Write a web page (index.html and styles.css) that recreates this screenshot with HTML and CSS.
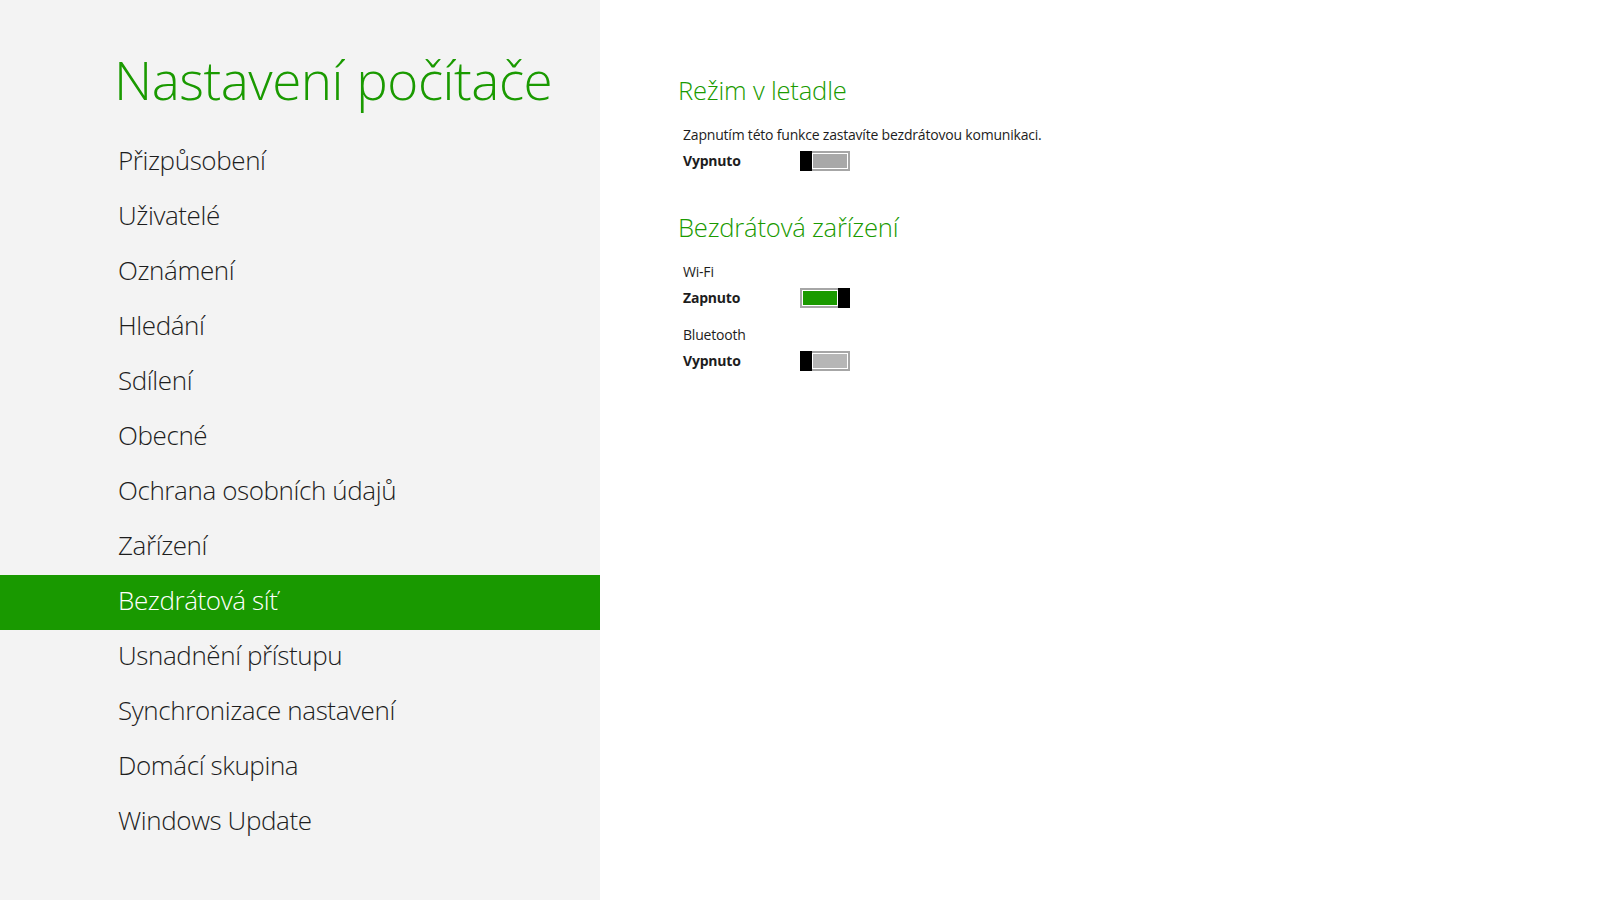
FILE: index.html
```html
<!DOCTYPE html>
<html lang="cs">
<head>
<meta charset="utf-8">
<title>Nastavení počítače</title>
<link rel="stylesheet" href="styles.css">
</head>
<body>
<div class="settings">
  <div class="sidebar">
    <h1 class="title">Nastavení počítače</h1>
    <ul class="menu">
      <li class="menu-item">Přizpůsobení</li>
      <li class="menu-item">Uživatelé</li>
      <li class="menu-item">Oznámení</li>
      <li class="menu-item">Hledání</li>
      <li class="menu-item">Sdílení</li>
      <li class="menu-item">Obecné</li>
      <li class="menu-item">Ochrana osobních údajů</li>
      <li class="menu-item">Zařízení</li>
      <li class="menu-item selected">Bezdrátová síť</li>
      <li class="menu-item">Usnadnění přístupu</li>
      <li class="menu-item">Synchronizace nastavení</li>
      <li class="menu-item">Domácí skupina</li>
      <li class="menu-item">Windows Update</li>
    </ul>
  </div>
  <div class="content">
    <section class="group">
      <h2 class="group-title">Režim v letadle</h2>
      <div class="setting">
        <div class="setting-label">Zapnutím této funkce zastavíte bezdrátovou komunikaci.</div>
        <div class="toggle-row">
          <span class="state">Vypnuto</span>
          <span class="toggle"><span class="thumb"></span><span class="track"></span></span>
        </div>
      </div>
    </section>
    <section class="group">
      <h2 class="group-title">Bezdrátová zařízení</h2>
      <div class="setting">
        <div class="setting-label">Wi-Fi</div>
        <div class="toggle-row">
          <span class="state">Zapnuto</span>
          <span class="toggle on"><span class="track"></span><span class="thumb"></span></span>
        </div>
      </div>
      <div class="setting">
        <div class="setting-label">Bluetooth</div>
        <div class="toggle-row">
          <span class="state">Vypnuto</span>
          <span class="toggle light"><span class="thumb"></span><span class="track"></span></span>
        </div>
      </div>
    </section>
  </div>
</div>
</body>
</html>
```

FILE: styles.css
```css
* {
  box-sizing: border-box;
}

body {
  margin: 0;
  background: #fff;
  color: #1d1d1d;
  font-family: "Open Sans", "Noto Sans", sans-serif;
}

.settings {
  display: flex;
  height: 900px;
}

.sidebar {
  width: 600px;
  flex-shrink: 0;
  background-color: #f3f3f3;
  padding-top: 48px;
}

.title {
  margin: 0 0 0 114px;
  font-size: 53px;
  font-weight: 300;
  line-height: 64px;
  color: #1a9a00;
  letter-spacing: -0.5px;
}

.menu {
  margin: 23px 0 0;
  padding: 0;
  list-style: none;
}

.menu-item {
  height: 55px;
  padding-left: 118px;
  font-size: 26px;
  font-weight: 300;
  line-height: 51px;
  color: #1d1d1d;
  letter-spacing: -0.4px;
}

.menu-item.selected {
  background-color: #199900;
  color: #fff;
}

.content {
  padding: 73px 0 0 78px;
}

.group {
  margin-bottom: 35px;
}

.group-title {
  margin: 0 0 15px;
  font-size: 25.6px;
  font-weight: 300;
  line-height: 36px;
  color: #1a9a00;
  letter-spacing: -0.2px;
}

.setting {
  padding-left: 5px;
  margin-bottom: 12px;
}

.setting-label {
  font-size: 14px;
  line-height: 22px;
  letter-spacing: -0.2px;
}

.toggle-row {
  display: flex;
  align-items: center;
  height: 29px;
}

.state {
  width: 117px;
  font-size: 14px;
  font-weight: 700;
  letter-spacing: -0.2px;
}

.toggle {
  display: flex;
  width: 50px;
  height: 20px;
}

.toggle .thumb {
  width: 12px;
  height: 20px;
  background-color: #000;
}

.toggle .track {
  flex: 1;
  border: 2px solid #a6a6a6;
  border-left: none;
  padding: 1px 1px 1px 0;
  background-clip: content-box;
  background-color: #a8a8a8;
  box-shadow: inset 0 0 0 1px #fff;
}

.toggle.light .track {
  background-color: #b6b6b6;
}

.toggle.on .track {
  border-left: 2px solid #a6a6a6;
  border-right: none;
  padding: 1px 0 1px 1px;
  background-color: #1a9a00;
}
```
